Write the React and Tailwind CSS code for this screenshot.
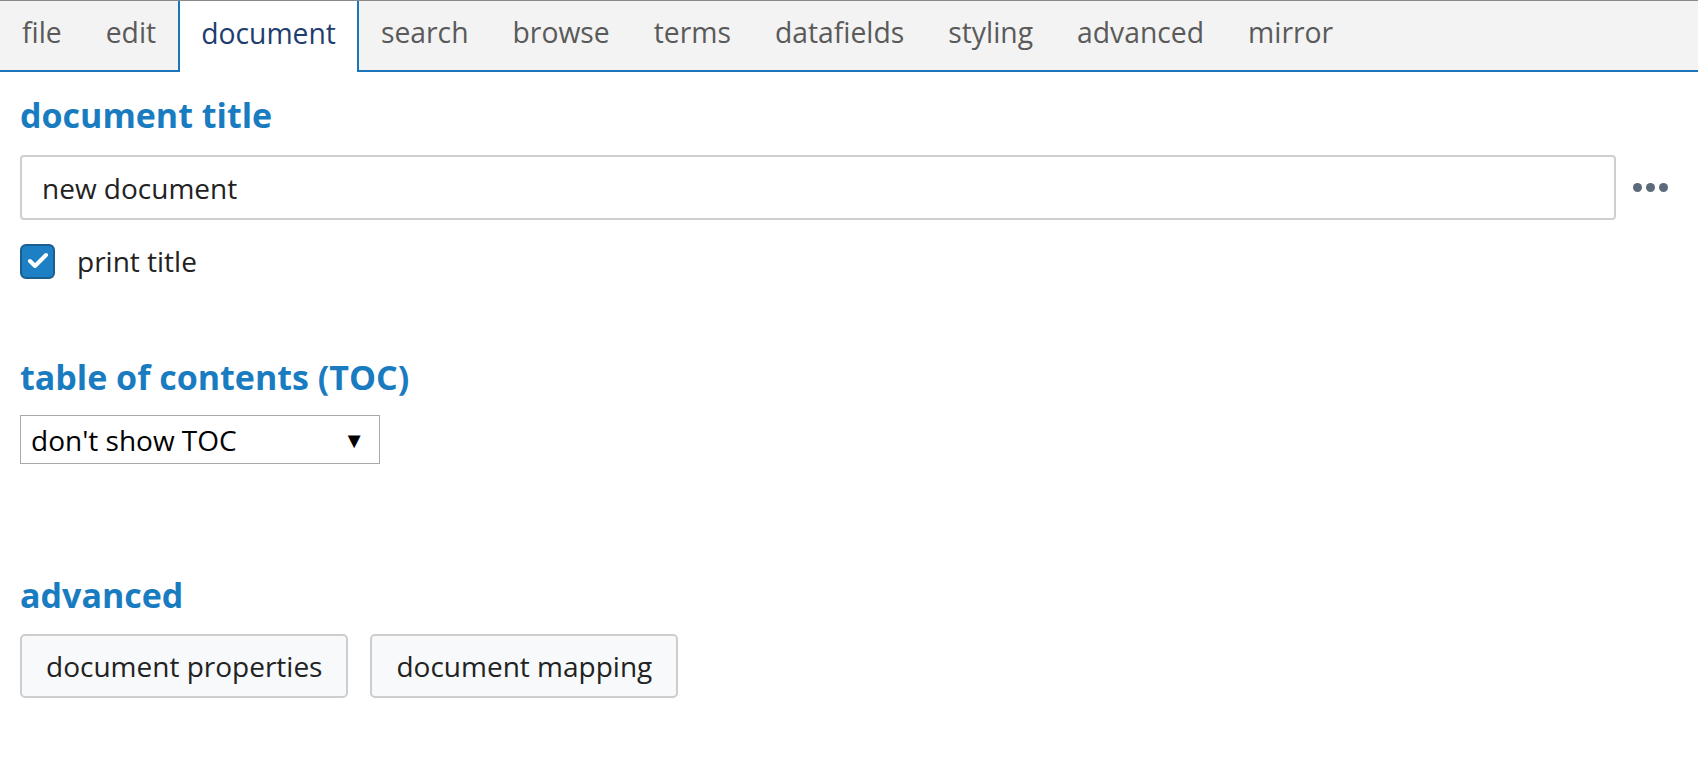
import { Check } from "lucide-react";

const TABS = ["file", "edit", "document", "search", "browse", "terms", "datafields", "styling", "advanced", "mirror"];

function TabBar() {
  return (
    <div className="flex h-[72px] items-stretch border-t border-b-2 border-t-[#8a8a8a] border-b-[#1b75b8] bg-[#f3f3f3] text-[28.3px]">
      {TABS.map((t) =>
        t === "document" ? (
          <div key={t} className="-mb-[2px] flex items-center border-x-2 border-[#1b75b8] bg-white px-[21px] pb-[6px] text-[#1f3d6e]">
            {t}
          </div>
        ) : (
          <div key={t} className="flex items-center px-[22px] pb-[6px] text-[#5a5a5a]">
            {t}
          </div>
        )
      )}
    </div>
  );
}

function Heading({ children, className = "" }) {
  return <h2 className={"text-[34px] font-bold leading-none text-[#1a7cc0] " + className}>{children}</h2>;
}

export default function App() {
  return (
    <div className="min-h-[770px] bg-white text-[28px]" style={{ fontFamily: '"Open Sans", "Noto Sans", sans-serif' }}>
      <TabBar />
      <div className="pl-[20px]">
        <Heading className="mt-[26px]">document title</Heading>
        <div className="mt-[23px] flex items-center">
          <div className="flex h-[65px] flex-1 items-center rounded-[4px] border-2 border-[#cfcfcf] px-[20px] text-[#222]">
            new document
          </div>
          <div className="ml-[17px] mr-[30px] flex w-[35px] items-center justify-between">
            <span className="h-[9px] w-[9px] rounded-full bg-[#5b6b7c]" />
            <span className="h-[9px] w-[9px] rounded-full bg-[#5b6b7c]" />
            <span className="h-[9px] w-[9px] rounded-full bg-[#5b6b7c]" />
          </div>
        </div>
        <div className="mt-[20px] flex items-center gap-[22px]">
          <div className="flex h-[35px] w-[35px] items-center justify-center rounded-[6px] border-2 border-[#1a5d8f] bg-[#1d80c4]">
            <Check className="h-[24px] w-[24px] text-white" strokeWidth={4} />
          </div>
          <span className="text-[#222]">print title</span>
        </div>
        <Heading className="mt-[78px]">table of contents (TOC)</Heading>
        <div className="mt-[21px] flex h-[49px] w-[360px] items-center justify-between border border-[#a9a9a9] pl-[10px] pr-[14px] text-black">
          <span>don't show TOC</span>
          <span className="text-[22px]">▼</span>
        </div>
        <Heading className="mt-[114px]">advanced</Heading>
        <div className="mt-[22px] flex gap-[22px]">
          <button className="h-[64px] rounded-[5px] border-2 border-[#cdcdcd] bg-[#f7f9fb] px-[24px] text-[#222]">
            document properties
          </button>
          <button className="h-[64px] rounded-[5px] border-2 border-[#cdcdcd] bg-[#f7f9fb] px-[24px] text-[#222]">
            document mapping
          </button>
        </div>
      </div>
    </div>
  );
}
